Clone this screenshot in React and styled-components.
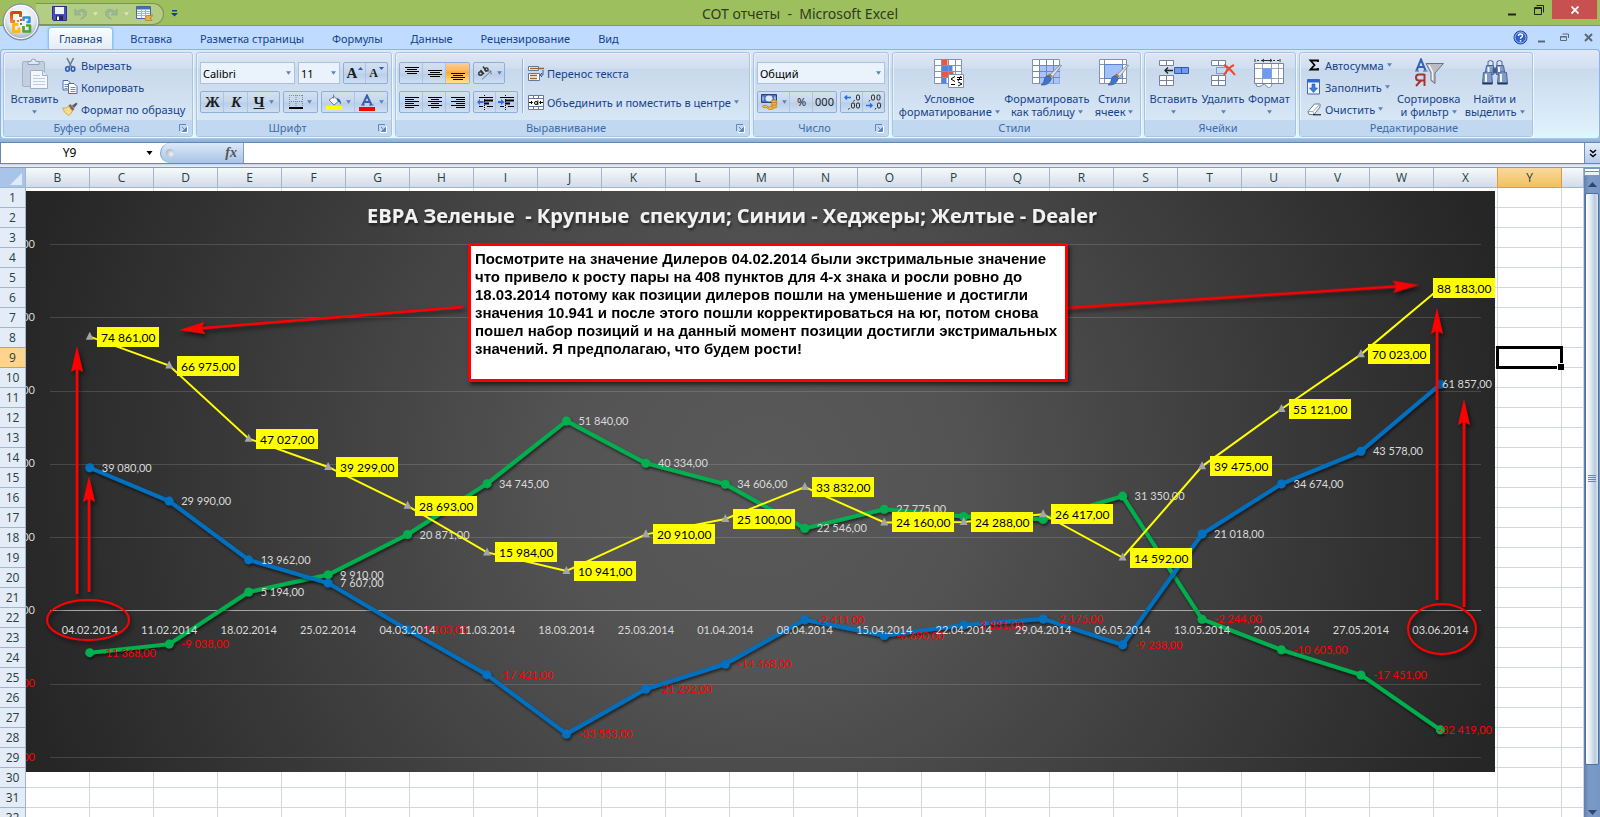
import React from "react";
import styled, { createGlobalStyle, css } from "styled-components";

const Global = createGlobalStyle`
  * { box-sizing: border-box; }
  body { margin: 0; background: #fff; overflow: hidden; }
  button, input, select { font: inherit; color: inherit; }
  svg { display: block; flex: none; }
`;

const Window = styled.div`
  display: flex;
  flex-direction: column;
  height: 100vh;
  overflow: hidden;
  font-family: "Noto Sans", "Open Sans", sans-serif;
  font-size: 11px;
  line-height: 13px;
  color: #15428b;
`;

/* ---------- title bar ---------- */

const TitleBar = styled.header`
  display: grid;
  grid-template-columns: 1fr auto 1fr;
  height: 26px;
  flex: none;
  background: #9dbf5e;
  border-bottom: 1px solid #7f9f45;
`;

const QuickBar = styled.div`
  display: flex;
  align-items: center;
  padding: 2px 0 2px 36px;
`;

const QuickPill = styled.div`
  display: flex;
  align-items: center;
  width: 128px;
  height: 22px;
  padding-left: 13px;
  gap: 2px;
  background: #b4cd85;
  border: 1px solid #7d9550;
  border-left: 0;
  border-radius: 0 11px 11px 0;
`;

const IconButton = styled.button`
  display: flex;
  align-items: center;
  justify-content: center;
  width: ${(p) => p.$w || 20}px;
  height: ${(p) => p.$h || 20}px;
  padding: 0;
  border: 0;
  background: ${(p) => p.$bg || "none"};
`;

const Title = styled.h1`
  margin: 0;
  font-size: 14px;
  line-height: 27px;
  font-weight: 400;
  color: #2f3a22;
  white-space: pre;
`;

const WindowButtons = styled.div`
  display: flex;
  justify-content: flex-end;
  align-items: flex-start;
  padding-right: 3px;
`;

const OfficeButton = styled.button`
  position: absolute;
  left: 2px;
  top: 3px;
  width: 38px;
  height: 38px;
  padding: 0;
  border: 0;
  background: none;
  z-index: 3;
`;

/* ---------- ribbon ---------- */

const TabRow = styled.nav`
  display: flex;
  align-items: flex-end;
  gap: 6px;
  height: 23px;
  flex: none;
  padding: 0 2px 0 48px;
  background: #bfdbff;
`;

const Tab = styled.button`
  height: 22px;
  padding: 0 10px;
  border: 1px solid transparent;
  border-bottom: 0;
  border-radius: 4px 4px 0 0;
  background: none;
  font-size: 11px;
  line-height: 16px;
  white-space: nowrap;
  ${(p) =>
    p.$active &&
    css`
      background: linear-gradient(#fbfdff, #e3ecf8);
      border-color: #8fc3ee;
      box-shadow: 0 0 2px #5fb6f0;
    `}
`;

const DocButtons = styled.div`
  display: flex;
  align-items: center;
  margin-left: auto;
  height: 23px;
  gap: 2px;
`;

const RibbonWrap = styled.section`
  flex: none;
  height: 94px;
  padding-bottom: 3px;
  background: linear-gradient(#bfdbff 0 80px, #9dbbe0 90px, #8eafd6);
  border-bottom: 1px solid #6488b5;
`;

const Ribbon = styled.div`
  display: flex;
  gap: 3px;
  height: 90px;
  padding: 2px 2px 1px;
  border: 1px solid #8db2e3;
  border-bottom-color: #a9c6e6;
  border-radius: 4px;
  background: linear-gradient(#dfe9f5, #d2e0f1 18px, #c9daee 19px, #dff0fb 80px, #d8fbff);
`;

const Group = styled.div`
  display: flex;
  flex-direction: column;
  width: ${(p) => p.$w}px;
  flex: none;
  border: 1px solid #a9c4df;
  border-radius: 3px;
  background: linear-gradient(#dde7f3, #d0deef 15px, #c8d8ec 16px, #d8e7f5 68px);
  box-shadow: 1px 1px 0 #eef6fd, inset 1px 1px 0 #e8f0f8;
  overflow: hidden;
`;

const GroupBody = styled.div`
  display: flex;
  align-items: flex-start;
  flex: 1;
  min-height: 0;
  padding: ${(p) => p.$pad || "0 3px"};
  gap: ${(p) => p.$gap || 0}px;
`;

const GroupLabel = styled.div`
  display: flex;
  flex: none;
  align-items: center;
  height: 16px;
  padding-right: 4px;
  background: #c1d8f0;
  color: #3e6aaa;
  font-size: 11px;
  line-height: 16px;

  span {
    flex: 1;
    text-align: center;
  }
`;

const BigButton = styled.button`
  display: flex;
  flex-direction: column;
  align-items: center;
  width: ${(p) => p.$w}px;
  padding: 5px 0 0;
  border: 0;
  background: none;
  white-space: nowrap;
  line-height: 13px;
`;

const BigIcon = styled.span`
  height: 34px;
`;

const CaretLine = styled.span`
  display: flex;
  align-items: center;
  justify-content: center;
  gap: 3px;
  height: 13px;
`;

const Stack = styled.div`
  display: flex;
  flex-direction: column;
  gap: ${(p) => p.$gap || 0}px;
  padding-top: ${(p) => p.$top || 0}px;
`;

const Line = styled.div`
  display: flex;
  gap: 3px;
`;

const SmallButton = styled.button`
  display: flex;
  align-items: center;
  gap: 3px;
  height: 22px;
  padding: 0 3px 0 0;
  border: 0;
  background: none;
  white-space: nowrap;
`;

const IconSlot = styled.span`
  display: flex;
  justify-content: center;
  width: 16px;
`;

const Segments = styled.div`
  display: flex;
  height: 22px;
  border: 1px solid #8fafd8;
  border-radius: 2px;
  background: linear-gradient(#d3e0f0, #c5d6ec 10px, #b9cee9 11px, #cfdff2);
`;

const Segment = styled.button`
  display: flex;
  align-items: center;
  justify-content: center;
  gap: ${(p) => p.$gap || 4}px;
  width: ${(p) => p.$w || 23}px;
  padding: 0;
  border: 0;
  background: ${(p) =>
    p.$active ? "linear-gradient(#f9cf96, #fdb55c 8px, #fba63c 9px, #ffe38a)" : "none"};

  & + & { box-shadow: -1px 0 0 #adc4e2; }
`;

const Glyph = styled.span`
  font-family: "Liberation Serif", serif;
  font-size: ${(p) => p.$size || 15}px;
  line-height: 18px;
  font-weight: 700;
  color: #1c1c1c;
  font-style: ${(p) => (p.$italic ? "italic" : "normal")};
  text-decoration: ${(p) => (p.$under ? "underline" : "none")};
`;

const NumGlyph = styled.span`
  font-size: 11px;
  line-height: 18px;
  color: #222;
`;

const Divider = styled.div`
  width: 2px;
  height: 54px;
  background: #8fb2de;
  border-right: 1px solid #eef5fc;
`;

const SelectBox = styled.div`
  position: relative;
  width: ${(p) => p.$w}px;
  height: 22px;

  select {
    width: 100%;
    height: 100%;
    padding: 0 2px;
    border: 1px solid #abc1de;
    border-radius: 0;
    background: #eaf2fb;
    color: #000;
    appearance: none;
  }

  svg {
    position: absolute;
    right: 4px;
    top: 9px;
    pointer-events: none;
  }
`;

/* ---------- formula bar ---------- */

const FormulaBar = styled.div`
  display: flex;
  flex: none;
  height: 21px;
  background: #fff;
  border-bottom: 1px solid #6488b5;
`;

const NameBox = styled.div`
  display: flex;
  align-items: center;
  width: 160px;
  border-left: 1px solid #6488b5;

  input {
    width: 137px;
    padding: 0;
    border: 0;
    text-align: center;
    font-size: 12px;
    line-height: 18px;
    color: #000;
    background: none;
  }
`;

const FxZone = styled.div`
  display: flex;
  align-items: center;
  justify-content: space-between;
  width: 84px;
  padding: 0 6px 0 5px;
  background: linear-gradient(#dce8f8, #a9c3e6);
  border: 1px solid #7d9cc6;
  border-width: 0 1px;
  border-radius: 10px 0 0 10px;
`;

const Knob = styled.span`
  width: 8px;
  height: 8px;
  border-radius: 4px;
  background: radial-gradient(circle at 65% 65%, #f2f4f7, #98a5b8);
`;

const FxButton = styled.button`
  padding: 0;
  border: 0;
  background: none;
  font-family: "Liberation Serif", serif;
  font-style: italic;
  font-weight: 700;
  font-size: 14px;
  line-height: 16px;
  color: #555;
`;

const FormulaInput = styled.input`
  flex: 1;
  min-width: 0;
  padding: 0 4px;
  border: 0;
  outline: 0;
  background: #fff;
`;

const ExpandButton = styled.button`
  display: flex;
  align-items: center;
  justify-content: center;
  width: 16px;
  padding: 0;
  border: 1px solid #6e8fb9;
  border-width: 0 0 0 1px;
  background: linear-gradient(#e4eefb, #b4cbea);
`;

const Splitter = styled.div`
  height: 4px;
  flex: none;
  background: linear-gradient(#c3d6ee, #eaf2fc);
  border-bottom: 1px solid #7d9ac0;
`;

/* ---------- sheet ---------- */

const Workspace = styled.main`
  display: flex;
  flex: 1;
  min-height: 0;
`;

const SheetArea = styled.div`
  position: relative;
  flex: 1;
  min-width: 0;
  overflow: hidden;
`;

const Sheet = styled.table`
  width: 100%;
  table-layout: fixed;
  border-collapse: separate;
  border-spacing: 0;
  font-family: "Open Sans", "Noto Sans", sans-serif;
  font-size: 12px;
  line-height: 16px;
  color: #24403f;

  col { width: 64px; }
  col:first-child { width: 26px; }
  col:last-child { width: auto; }
  th { font-weight: 400; padding: 1px 0 0; }
`;

const HeadCell = styled.th`
  height: 20px;
  border-right: 1px solid #9eb6ce;
  border-bottom: 1px solid ${(p) => (p.$active ? "#f29536" : "#9eb6ce")};
  background: ${(p) =>
    p.$active ? "linear-gradient(#f9d99f, #f1c15f)" : "linear-gradient(#f6fafb, #d3dbe9)"};
  ${(p) => p.$active && "border-right-color: #f29536; box-shadow: -1px 0 0 #f29536;"}
`;

const Corner = styled.th`
  height: 20px;
  border-right: 1px solid #9eb6ce;
  border-bottom: 1px solid #9eb6ce;
  background: #a9c4e9;

  svg { margin: 2px 3px 0 auto; }
`;

const RowHead = styled.th`
  height: 20px;
  border-right: 1px solid #9eb6ce;
  border-bottom: 1px solid ${(p) => (p.$active ? "#f29536" : "#9eb6ce")};
  background: ${(p) => (p.$active ? "#ffd58d" : "#e4ecf7")};
  ${(p) => p.$active && "box-shadow: 0 -1px 0 #f29536;"}
`;

const Cell = styled.td`
  position: relative;
  height: 20px;
  padding: 0;
  border-right: 1px solid #d0d7e5;
  border-bottom: 1px solid #d0d7e5;
`;

const Selection = styled.span`
  position: absolute;
  inset: -2px;
  border: 3px solid #000;
  z-index: 1;

  &::after {
    content: "";
    position: absolute;
    right: -4px;
    bottom: -4px;
    width: 6px;
    height: 6px;
    background: #000;
    border: 1px solid #fff;
    border-width: 1px 0 0 1px;
  }
`;

const ChartFrame = styled.figure`
  position: absolute;
  left: 26px;
  top: 23px;
  width: 1469px;
  height: 581px;
  margin: 0;
  z-index: 2;
`;

const Note = styled.p`
  position: absolute;
  left: 442px;
  top: 52px;
  width: 600px;
  height: 139px;
  margin: 0;
  padding: 4px;
  border: 3px solid #f00;
  background: #fff;
  box-shadow: 2px 3px 4px rgba(0, 0, 0, 0.6);
  font-family: "Liberation Sans", Arial, sans-serif;
  font-weight: 700;
  font-size: 15px;
  line-height: 18px;
  color: #000;
  white-space: pre;
`;

const ScrollBar = styled.div`
  display: flex;
  flex-direction: column;
  width: 16px;
  flex: none;
  background: linear-gradient(90deg, #5f7fae, #7b9ac6 5px, #7596c4);
`;

const SplitBox = styled.div`
  height: 8px;
  border: 1px solid #7c9ac0;
  background: #eaf1fa;
  box-shadow: inset 0 2px 0 #fff, inset 0 3px 0 #6d8db8;
`;

const ScrollButton = styled.button`
  display: flex;
  align-items: center;
  justify-content: center;
  width: 16px;
  height: ${(p) => p.$h}px;
  padding: 0;
  border: 0;
  background: none;
`;

const Thumb = styled.div`
  display: flex;
  align-items: center;
  justify-content: center;
  flex: 1;
  margin: 0 1px 43px;
  border: 1px solid #4f6f9f;
  border-radius: 2px;
  background: linear-gradient(90deg, #fff, #dfe8f2 5px, #b9c9dd 9px, #dbe6f3);
`;

/* ---------- icons ---------- */

const Caret = ({ color = "#5b82b8", w = 5 }) => (
  <svg width={w} height="4" viewBox="0 0 6 4"><path d="M0 0h6L3 4z" fill={color} /></svg>
);

const Launcher = () => (
  <svg width="9" height="9" viewBox="0 0 9 9" fill="none">
    <path d="M.5 7V.5H7" stroke="#5f88b8" />
    <path d="M2 8.500h6.500V2" stroke="#fff" />
    <path d="M3 3l3 3M7.500 3.500v4h-4z" stroke="#5f88b8" fill="#5f88b8" />
  </svg>
);

const OfficeLogo = () => (
  <svg width="38" height="38" viewBox="0 0 38 38">
    <defs>
      <radialGradient id="orb" cx="50%" cy="35%" r="65%">
        <stop offset="0" stopColor="#ffffff" />
        <stop offset=".6" stopColor="#e3e8ee" />
        <stop offset="1" stopColor="#9aa7b8" />
      </radialGradient>
      <linearGradient id="red" x2="0" y2="1"><stop stopColor="#d8400c" /><stop offset="1" stopColor="#f58220" /></linearGradient>
    </defs>
    <circle cx="19" cy="19" r="18" fill="url(#orb)" stroke="#76849a" />
    <circle cx="19" cy="19" r="16.500" fill="none" stroke="#fff" />
    <g fill="none" strokeWidth="3" strokeLinejoin="round">
      <path d="M13 18.500h-3.500V10.500q0-1 1-1H18.500V14" stroke="url(#red)" />
      <path d="M21.500 18V14.500h6v4.500h-3" stroke="#2f8fe0" strokeWidth="2.500" />
      <path d="M16.500 21.500h-5v7h5.500v-4" stroke="#fdb813" />
      <path d="M21.500 23v5.500h6.500v-6h-4" stroke="#4ea72e" strokeWidth="2.700" />
    </g>
    <g fill="#f27b20"><path d="M15 17h2v2h-2z" /><path d="M18 20h2v2h-2z" fill="#4ea72e" /><path d="M18 16h2v2h-2z" fill="#e8541a" /></g>
  </svg>
);

const SaveIcon = () => (
  <svg width="15" height="15" viewBox="0 0 15 15">
    <path d="M.5.500h14v14h-13l-1-1z" fill="#4a4fc0" stroke="#2d2f8a" />
    <path d="M3 1h9v7H3z" fill="#eef2fb" /><path d="M4 9.500h7V14H4z" fill="#222a55" /><path d="M5 10.500h2V14H5z" fill="#fff" />
  </svg>
);
const UndoIcon = ({ flip }) => (
  <svg width="13" height="13" viewBox="0 0 13 13" fill="none">
    <g transform={flip ? "matrix(-1 0 0 1 13 0)" : undefined}>
      <path d="M.8 2v6h6L4.800 6Q8.500 2.800 9.800 6T6.500 12.300Q13.500 10 12.300 5T3 4.200z" fill="#9db99c" stroke="#88a688" strokeWidth=".6" />
    </g>
  </svg>
);
const TableCheckIcon = () => (
  <svg width="17" height="15" viewBox="0 0 17 15">
    <path d="M.5.500h14v12H.5z" fill="#fff" stroke="#46669c" /><path d="M1 1h13v2.500H1z" fill="#3f6fc4" />
    <path d="M1 5.500h13M1 7.500h13M1 9.500h13M5.500 3v9M9.500 3v9" stroke="#9db5da" />
    <path d="M9 12.500q.5-3.500 3-3t4.500-1q0 3-2.500 3.500l2 2.500H9.500z" fill="#e8b04a" stroke="#a8701a" strokeWidth=".6" />
  </svg>
);
const QatMenuIcon = () => (
  <svg width="7" height="7" viewBox="0 0 7 7"><path d="M1 0h5v1.500H1zM0 3h7L3.500 6.500z" fill="#15428b" /></svg>
);

const HelpIcon = () => (
  <svg width="15" height="15" viewBox="0 0 15 15">
    <circle cx="7.500" cy="7.500" r="6.500" fill="#2c5fd0" stroke="#1d3f96" /><circle cx="7.500" cy="7.500" r="5.500" fill="none" stroke="#b9d2ff" strokeWidth=".8" />
    <path d="M5.500 6q0-2 2-2t2 1.700q0 1-1.200 1.600-.8.400-.8 1.400" fill="none" stroke="#fff" strokeWidth="1.400" /><circle cx="7.500" cy="10.800" r=".9" fill="#fff" />
  </svg>
);

const PasteIcon = () => (
  <svg width="28" height="32" viewBox="0 0 28 32">
    <rect x="1.500" y="3.500" width="22" height="25" rx="1.500" fill="#c3cfdf" stroke="#a4b2c8" />
    <path d="M7 3.500h3q0-2.500 2.500-2.500T15 3.500h3v3H7z" fill="#dfe6ef" stroke="#8fa0b8" />
    <path d="M9.500 12.500h12l5 5v13h-17z" fill="#f4f7fb" stroke="#9db0cb" /><path d="M21.500 12.500v5h5" fill="#dfe8f4" stroke="#9db0cb" />
    <path d="M12 17.500h7M12 20.500h12M12 23.500h12M12 26.500h12" stroke="#bccbe0" />
  </svg>
);
const CutIcon = () => (
  <svg width="14" height="16" viewBox="0 0 14 16" fill="none">
    <path d="M4 1l4.500 9M10.500 1L6 10" stroke="#6d7b90" strokeWidth="1.600" />
    <ellipse cx="4.500" cy="12" rx="1.800" ry="2.200" stroke="#2d5cb0" strokeWidth="1.600" /><ellipse cx="10" cy="12" rx="1.800" ry="2.200" stroke="#2d5cb0" strokeWidth="1.600" />
  </svg>
);
const CopyIcon = () => (
  <svg width="16" height="14" viewBox="0 0 16 14">
    <path d="M1 .500h5l2.500 2.500v7H1z" fill="#fff" stroke="#4c6ea5" /><path d="M2.500 4.500h4M2.500 6.500h4M2.500 8.500h3" stroke="#6c8fc6" />
    <path d="M6.500 3.500h5.500l3 3v7H6.500z" fill="#fff" stroke="#4c6ea5" /><path d="M8.500 7.500h5M8.500 9.500h5M8.500 11.500h5" stroke="#6c8fc6" />
  </svg>
);
const BrushIcon = () => (
  <svg width="16" height="14" viewBox="0 0 16 14">
    <path d="M.500 6q4 1 6-2l4 5q-2 4-4 4.500Q2 11 .5 6z" fill="#f5dc8a" stroke="#c09a3a" strokeWidth=".7" />
    <path d="M6.500 3.500L8.500 2l4 5-2 2z" fill="#8a6a5c" /><path d="M10 3.500L14.500.500l1 1.500L12 6z" fill="#555e70" />
  </svg>
);
const GrowArrow = () => (
  <svg width="5" height="14" viewBox="0 0 5 14"><path d="M0 4h5L2.500 1z" fill="#2d5cb0" /></svg>
);
const ShrinkArrow = () => (
  <svg width="5" height="14" viewBox="0 0 5 14"><path d="M0 1h5L2.500 4z" fill="#2d5cb0" /></svg>
);
const BordersIcon = () => (
  <svg width="14" height="14" viewBox="0 0 14 14"><path d="M.5 0v12M13.500 0v12M7 0v12M0 .500h14M0 6.500h14" stroke="#7888a8" strokeDasharray="1 1" fill="none" /><path d="M0 12h14v2H0z" /></svg>
);
const FillIcon = () => (
  <svg width="16" height="16" viewBox="0 0 16 16">
    <path d="M7.500.500v4M3 6l5-3.500 5 4.500-5 4z" fill="#f4f7fc" stroke="#6d7f9c" /><path d="M10.500 4q5 1 4.500 7-1-3-3.500-4z" fill="#2d5cb0" /><path d="M0 12h16v4H0z" fill="#ff0" />
  </svg>
);
const FontColorIcon = () => (
  <svg width="16" height="17" viewBox="0 0 16 17">
    <path d="M3.500 11L8 1.500 12.500 11M5 8h6" fill="none" stroke="#3a5ea8" strokeWidth="2" /><path d="M2 11h4M10 11h4.500" stroke="#3a5ea8" /><path d="M0 13h16v4H0z" fill="#f00" />
  </svg>
);
const LinesIcon = ({ rows }) => (
  <svg width="14" height="14" viewBox="0 0 14 14">
    {rows.map(([x, y, l]) => <path key={y} d={`M${x} ${y}.5h${l}`} stroke="#000" />)}
  </svg>
);
const OrientIcon = () => (
  <svg width="16" height="14" viewBox="0 0 16 14" fill="none" stroke="#333">
    <path d="M5 13.500L14 5M10.500 5H14v3.500" stroke="#6a7a90" /><circle cx="3.500" cy="7.500" r="1.800" strokeWidth="1.400" /><path d="M3.500 4l3.500 4M6 .5l3.500 5" strokeWidth="1.400" /><circle cx="9.500" cy="3.500" r="1.600" strokeWidth="1.400" />
  </svg>
);
const IndentIcon = ({ right }) => (
  <svg width="17" height="15" viewBox="0 0 17 15">
    <path d="M2 2.500h14M2 11.500h4M10 11.500h6" stroke="#000" /><path d="M7 5.500h9M7 8.500h5" stroke="#000" strokeWidth="2" /><path d="M7.500 0v15" stroke="#000" strokeDasharray="1 1" />
    <path d={right ? "M6.500 7L3 4v2H0v2h3v2z" : "M0 7l3-3v2h3.500v2H3v2z"} fill="#2d6be0" />
  </svg>
);
const WrapIcon = () => (
  <svg width="16" height="15" viewBox="0 0 16 15">
    <path d="M.5.500h10v4H.5zM.5 7.500h11v7H.5z" fill="#fff" stroke="#62799b" /><path d="M2 2.500h14M2 9.500h7M2 12.500h7" stroke="#a4622b" strokeWidth="1.300" />
    <path d="M15 4v5h-2.500M14 7l-2 2 2 2" stroke="#3d5d8e" fill="none" />
  </svg>
);
const MergeIcon = () => (
  <svg width="16" height="15" viewBox="0 0 16 15">
    <path d="M.5.500h15v14H.5z" fill="#fff" stroke="#62799b" /><path d="M1 3.500h14M1 11.500h14M5.500 0v3M10.500 0v3M5.500 12v3M10.500 12v3" stroke="#62799b" />
    <path d="M1 7.500h3M15 7.500h-3M3 6l1.500 1.500L3 9M13 6l-1.500 1.500L13 9" stroke="#000" fill="none" /><circle cx="8" cy="8" r="1.500" fill="none" stroke="#000" /><path d="M9.800 5.500v4.500" stroke="#000" />
  </svg>
);
const MoneyIcon = () => (
  <svg width="17" height="16" viewBox="0 0 17 16">
    <path d="M.5.500h15v8H.5z" fill="#4a72c0" stroke="#28457f" /><ellipse cx="8" cy="4.500" rx="3.500" ry="3" fill="#dfe9fb" /><path d="M2 2.500v4M14 2.500v4" stroke="#dfe9fb" />
    <g fill="#f5b93a" stroke="#a8701a" strokeWidth=".6"><ellipse cx="13" cy="7.500" rx="3" ry="1.500" /><ellipse cx="13" cy="10" rx="3" ry="1.500" /><ellipse cx="13" cy="12.500" rx="3" ry="1.500" /><ellipse cx="9.500" cy="14" rx="3" ry="1.500" /><ellipse cx="4" cy="12.500" rx="2.500" ry="1.300" /></g>
  </svg>
);
const DecimalIcon = ({ less }) => (
  <svg width="17" height="16" viewBox="0 0 17 16">
    <path d={less ? "M1 11.500h6M5 9.500l2 2-2 2" : "M7 3.500H1M3 1.500l-2 2 2 2"} stroke="#2d6be0" strokeWidth="1.500" fill="none" />
    <g fill="none" stroke="#222">
      {less ? (
        <><path d="M5 6l-1 1.500M11 14l-1 1.500" /><rect x="6.500" y="1" width="3" height="5" rx="1.300" /><rect x="12" y="1" width="3" height="5" rx="1.300" /><rect x="12.500" y="9" width="3" height="5" rx="1.300" /></>
      ) : (
        <><path d="M10.500 6l-1 1.500M5.500 14l-1 1.500" /><rect x="12.500" y="1" width="3" height="5" rx="1.300" /><rect x="7.500" y="9" width="3" height="5" rx="1.300" /><rect x="12.500" y="9" width="3" height="5" rx="1.300" /></>
      )}
    </g>
  </svg>
);
const GridBase = ({ children }) => (
  <svg width="30" height="30" viewBox="0 0 30 30">
    <path d="M.5 1.500h27v24H.5z" fill="#fff" stroke="#8494b0" />
    {children}
  </svg>
);
const gridLines = "M1 7.500h27M1 13.500h27M1 19.500h27M7.500 2v24M14.500 2v24M21.500 2v24";
const Brush = () => (
  <g>
    <path d="M29.500 7.500l-10 13-3-2.500L28 7z" fill="#d9dde4" stroke="#7c8594" strokeWidth=".8" />
    <path d="M19 19.500l-3.500-2 2-2 3 2.500z" fill="#a8793a" /><path d="M19.500 20.500l-3.500-3q-4 1-4 5.500-1 3-3 4 8 1 10.500-6.500z" fill="#3f74c8" stroke="#2a4f94" strokeWidth=".6" />
  </g>
);
const CondFormatIcon = () => (
  <GridBase>
    <path d="M7.500 1.500h6v6h-6zM7.500 13.500h12v6h-12z" fill="#f0563c" /><path d="M7.500 7.500h11v6h-11zM7.500 19.500h5v6h-5z" fill="#4d86e8" />
    <path d={gridLines} stroke="#8494b0" fill="none" />
    <path d="M14.500 16.500h15v13h-15z" fill="#fff" stroke="#8494b0" /><path d="M21 18.500l-4 2.500 4 2.500M17 26.500h4M23 19.500h5M23 21.500h5M27 18l-3 5M24 24l4 2-4 2" stroke="#000" fill="none" />
  </GridBase>
);
const FormatTableIcon = () => (
  <GridBase><path d="M7.500 7.500h20v18h-20z" fill="#a8c4f8" /><path d={gridLines} stroke="#7188b4" fill="none" /><Brush /></GridBase>
);
const CellStylesIcon = () => (
  <GridBase><path d="M1 6.500h27M1 20.500h27M5.500 2v24M23.500 2v24" stroke="#8494b0" /><path d="M5.500 6.500h18v14h-18z" fill="#a2c0fa" stroke="#5c82c8" /><Brush /></GridBase>
);
const InsertCellsIcon = () => (
  <svg width="30" height="30" viewBox="0 0 30 30"><g fill="#fff" stroke="#75839f"><path d="M.5 2.500h14v5H.5zM7.500 2.500v5M.5 17.500h14v10H.5zM7.500 17.500v10M.5 22.500h14" /><path d="M15.500 9.500h14v6h-14zM22.500 9.500v6" fill="#6d9cf0" stroke="#39589c" /></g><path d="M14 12.500H6M9 9.500l-3 3 3 3" stroke="#222" fill="none" strokeWidth="1.300" /></svg>
);
const DeleteCellsIcon = () => (
  <svg width="30" height="30" viewBox="0 0 30 30"><g fill="#fff" stroke="#75839f"><path d="M3.500 2.500h14v5h-14zM10.500 2.500v5M3.500 17.500h14v10h-14zM10.500 17.500v10M3.500 22.500h14" /></g><path d="M8.500 9.500h10v6h-10z" fill="none" stroke="#3b5ba5" strokeDasharray="1 1" /><path d="M16 7q5 2.500 11 10M26 7q-5 2-10 10" stroke="#f0472a" strokeWidth="2" fill="none" /></svg>
);
const FormatCellsIcon = () => (
  <svg width="30" height="30" viewBox="0 0 30 30"><path d="M.5 5.500h29v20H.5z" fill="#fff" stroke="#75839f" /><path d="M1 10.500h28M1 20.500h28M8.500 6v19M17.500 6v19M24.500 6v19" stroke="#9aa8c0" /><path d="M8.500 10.500h9v10h-9z" fill="#6d9cf0" /><path d="M1 1v3M8 2.500h10M26 1v3M10 1L8 2.500 10 4M16 1l2 1.500L16 4" stroke="#333" fill="none" /><path d="M3 2.500h22" stroke="#333" strokeDasharray="2 2" /><path d="M2 26q0 3 3 2.500t4-2 4 2 5-2.500" fill="#fff" stroke="#75839f" /></svg>
);
const SumIcon = () => (
  <svg width="14" height="14" viewBox="0 0 14 14"><path d="M11 4V2.500H3.500L7.500 7l-4 4.500H11V10" fill="none" stroke="#000" strokeWidth="1.800" /></svg>
);
const FillDownIcon = () => (
  <svg width="14" height="16" viewBox="0 0 14 16"><path d="M.5.500h12v14.500H.5z" fill="#eef4fd" stroke="#4468b0" /><path d="M.5.500h12v3H.5z" fill="#2f66d0" /><path d="M5 5h3v4h2.500L6.500 13.500 2.500 9H5z" fill="#3f7be8" stroke="#2450a8" strokeWidth=".6" /></svg>
);
const EraserIcon = () => (
  <svg width="14" height="14" viewBox="0 0 14 14"><path d="M1 9.500L7.500 2h5.500v3L7 12.500H2z" fill="#fff" stroke="#6c7a92" /><path d="M1 9.500h5L13 2M6 9.500l1 3" stroke="#9aa8c0" fill="none" /><path d="M6 12.800h8" stroke="#000" /></svg>
);
const SortIcon = () => (
  <svg width="30" height="30" viewBox="0 0 30 30">
    <path d="M2.500 12.500L7 1.500l4.500 11M4 9h6" fill="none" stroke="#3560b8" strokeWidth="2" /><path d="M1 13h4M9 13h4.500" stroke="#3560b8" />
    <path d="M10.500 16v12M10.500 16.500H5q-3 0-3 3t3 3h5.500M7 22.500L2 28" fill="none" stroke="#a83430" strokeWidth="2" />
    <path d="M12 5.500h17.500L21 15v10.500l-4-3V15z" fill="#b9bcc2" stroke="#6e7278" /><path d="M15 7l3.500 7v8" stroke="#f2f3f5" strokeWidth="1.500" fill="none" />
  </svg>
);
const FindIcon = () => (
  <svg width="30" height="30" viewBox="0 0 30 30">
    <g fill="#7f9bc6" stroke="#4a6496">
      <path d="M8 3.500q2.500-2 5 0v4H8zM17 3.500q2.500-2 5 0v4h-5z" fill="#dbe5f4" /><path d="M6.500 7.500h7v9H5zM16.500 7.500h7l1.500 9h-8.500z" /><path d="M13 10h4v5h-4z" fill="#3d5a90" />
      <path d="M3.500 14.500q4-1.500 8 0l1 11H2.500zM18.500 14.500q4-1.500 8 0l1 11h-10z" />
    </g>
    <path d="M6 16v8M21 16v8M8.500 9v5M19 9v5" stroke="#eef4fc" strokeWidth="2" /><path d="M2.500 25.500h10M17.500 25.500h10" stroke="#22365e" strokeWidth="2" />
  </svg>
);

/* ---------- chart ---------- */

const X0 = 63.75;
const STEP = 79.45;
const ZERO = 420;
const px = (i) => X0 + i * STEP;
const py = (v) => ZERO - (v * 73.3) / 20000;

const DATES = ["04.02.2014", "11.02.2014", "18.02.2014", "25.02.2014", "04.03.2014", "11.03.2014", "18.03.2014", "25.03.2014", "01.04.2014", "08.04.2014", "15.04.2014", "22.04.2014", "29.04.2014", "06.05.2014", "13.05.2014", "20.05.2014", "27.05.2014", "03.06.2014"];
const GREEN = [-11368, -9038, 5194, 9910, 20871, 34745, 51840, 40334, 34606, 22546, 27775, 25800, 25000, 31350, -2244, -10605, -17451, -32419];
const BLUE = [39080, 29990, 13962, 7607, -5103, -17421, -33553, -21292, -14468, -2411, -6690, -3831, -2175, -9238, 21018, 34674, 43578, 61857];
const YELLOW = [74861, 66975, 47027, 39299, 28693, 15984, 10941, 20910, 25100, 33832, 24160, 24288, 26417, 14592, 39475, 55121, 70023, 88183];
const UNLABELLED = [11, 12];
const AXIS = [100000, 80000, 60000, 40000, 20000, 0, -20000, -40000];
const LAST = DATES.length - 1;

const money = (v) => {
  const s = String(Math.abs(v));
  const head = s.slice(0, -3);
  return `${v < 0 ? "-" : ""}${head ? head + " " : ""}${s.slice(-3)},00`;
};
const poly = (data) => data.map((v, i) => `${px(i)},${py(v)}`).join(" ");

const ChartText = styled.text`
  font-family: Lato, "Open Sans", sans-serif;
  font-size: ${(p) => p.$size || 11}px;
  fill: ${(p) => p.$fill || "#d9d9d9"};
`;
const ChartTitle = styled.text`
  font-family: "Open Sans", "Noto Sans", sans-serif;
  font-weight: 700;
  font-size: 20px;
  fill: #f2f2f2;
  white-space: pre;
`;

const Series = ({ data, color }) => (
  <g filter="url(#soft)">
    <polyline points={poly(data)} fill="none" stroke={color} strokeWidth="4" strokeLinejoin="round" />
    {data.map((v, i) => <circle key={i} cx={px(i)} cy={py(v)} r="4.500" fill={color} />)}
  </g>
);

const Labels = ({ data, skip = [] }) =>
  data.map((v, i) =>
    skip.includes(i) ? null : (
      <ChartText
        key={i}
        x={i === LAST ? 1466 : px(i) + 12}
        y={py(v) + 4}
        textAnchor={i === LAST ? "end" : "start"}
        $fill={v < 0 ? "#f00" : undefined}
      >
        {money(v)}
      </ChartText>
    )
  );

const Arrow = ({ from, to }) => {
  const [x1, y1] = from;
  const [x2, y2] = to;
  const len = Math.hypot(x2 - x1, y2 - y1);
  const deg = (Math.atan2(y2 - y1, x2 - x1) * 180) / Math.PI;
  return (
    <g transform={`translate(${x2} ${y2}) rotate(${deg})`} fill="#f00">
      <path d={`M${-len} -1.300H-22V1.300H${-len}z`} />
      <path d="M0 0L-26 -6L-22.500 0L-26 6z" />
    </g>
  );
};

const Chart = () => (
  <ChartFrame>
    <svg width="1469" height="581" viewBox="0 0 1469 581" role="img" aria-label="COT">
      <defs>
        <radialGradient id="bg" gradientUnits="userSpaceOnUse" cx="735" cy="290" r="760">
          <stop offset="0" stopColor="#595959" />
          <stop offset=".25" stopColor="#545454" />
          <stop offset="1" stopColor="#262626" />
        </radialGradient>
        <filter id="soft" x="-5%" y="-5%" width="110%" height="115%">
          <feDropShadow dx="1" dy="2" stdDeviation="1.500" floodColor="#000" floodOpacity=".6" />
        </filter>
        <filter id="marks" filterUnits="userSpaceOnUse" x="0" y="0" width="1469" height="581">
          <feDropShadow dx="2" dy="3" stdDeviation="2" floodColor="#000" floodOpacity=".6" />
        </filter>
      </defs>
      <rect width="1469" height="581" fill="url(#bg)" />
      {AXIS.map((v) => (
        <g key={v}>
          <path
            d={`M24 ${v === 0 ? 419.5 : Math.floor(py(v)) + 0.5}H1455`}
            stroke={v === 0 ? "#a6a6a6" : "#fff"}
            strokeOpacity={v === 0 ? 1 : 0.14}
          />
          <ChartText x="9" y={py(v) + 3} textAnchor="end" $fill={v < 0 ? "#f00" : undefined}>{money(v)}</ChartText>
        </g>
      ))}
      <ChartTitle x="341" y="32" filter="url(#soft)">{"ЕВРА Зеленые  - Крупные  спекули; Синии - Хеджеры; Желтые - Dealer"}</ChartTitle>
      <Series data={GREEN} color="#00b050" />
      <Series data={BLUE} color="#0070c0" />
      <Labels data={GREEN} skip={UNLABELLED} />
      <Labels data={BLUE} />
      <polyline points={poly(YELLOW)} fill="none" stroke="#ff0" strokeWidth="2" />
      {YELLOW.map((v, i) => {
        const x = px(i);
        const y = py(v);
        const bx = i === LAST ? 1407 : Math.floor(x + 8);
        return (
          <g key={i}>
            <path d={`M${x} ${y - 5}l4 8h-8z`} fill="#a5a5a5" />
            <rect x={bx} y={Math.round(y - 10)} width="62" height="20" fill="#ff0" />
            <ChartText x={bx + 4} y={Math.round(y) + 5} $size={12} $fill="#000">{money(v)}</ChartText>
          </g>
        );
      })}
      {DATES.map((d, i) => <ChartText key={d} x={px(i)} y="443" textAnchor="middle">{d}</ChartText>)}
      <g filter="url(#marks)">
        <Arrow from={[437, 116]} to={[153, 139]} />
        <Arrow from={[1039, 117]} to={[1393, 94]} />
        <Arrow from={[51, 403]} to={[51, 155]} />
        <Arrow from={[63, 401]} to={[63, 285]} />
        <Arrow from={[1411, 409]} to={[1411, 117]} />
        <Arrow from={[1438, 416]} to={[1438, 208]} />
        <ellipse cx="62" cy="429" rx="41" ry="20" fill="none" stroke="#f00" strokeWidth="2" />
        <ellipse cx="1416" cy="438" rx="34" ry="25" fill="none" stroke="#f00" strokeWidth="2" />
      </g>
    </svg>
    <Note>{`Посмотрите на значение Дилеров 04.02.2014 были экстримальные значение
что привело к росту пары на 408 пунктов для 4-х знака и росли ровно до
18.03.2014 потому как позиции дилеров пошли на уменьшение и достигли
значения 10.941 и после этого пошли корректироваться на юг, потом снова
пошел набор позиций и на данный момент позиции достигли экстримальных
значений. Я предполагаю, что будем рости!`}</Note>
  </ChartFrame>
);

/* ---------- page ---------- */

const TABS = ["Главная", "Вставка", "Разметка страницы", "Формулы", "Данные", "Рецензирование", "Вид"];
const COLUMNS = "BCDEFGHIJKLMNOPQRSTUVWXY".split("");
const ROWS = Array.from({ length: 32 }, (_, i) => i + 1);

const RibbonGroup = ({ w, label, launcher, pad, gap, children }) => (
  <Group $w={w}>
    <GroupBody $pad={pad} $gap={gap}>{children}</GroupBody>
    <GroupLabel><span>{label}</span>{launcher && <Launcher />}</GroupLabel>
  </Group>
);

const Big = ({ w, icon, first, second }) => (
  <BigButton $w={w}>
    <BigIcon>{icon}</BigIcon>
    <span>{first}</span>
    <CaretLine>{second}<Caret /></CaretLine>
  </BigButton>
);

const Small = ({ icon, label, menu }) => (
  <SmallButton>
    <IconSlot>{icon}</IconSlot>
    {label}
    {menu && <Caret />}
  </SmallButton>
);

export default function App() {
  return (
    <Window>
      <Global />
      <TitleBar>
        <QuickBar>
          <QuickPill>
            <IconButton $w={20} aria-label="Сохранить"><SaveIcon /></IconButton>
            <IconButton $w={18} aria-label="Отменить"><UndoIcon /></IconButton>
            <IconButton $w={9} aria-label="История отмены"><Caret color="#dbe6c2" /></IconButton>
            <IconButton $w={18} aria-label="Вернуть"><UndoIcon flip /></IconButton>
            <IconButton $w={9} aria-label="История возврата"><Caret color="#dbe6c2" /></IconButton>
            <IconButton $w={22} aria-label="Таблица"><TableCheckIcon /></IconButton>
          </QuickPill>
          <IconButton aria-label="Настройка панели"><QatMenuIcon /></IconButton>
        </QuickBar>
        <Title>COT отчеты  -  Microsoft Excel</Title>
        <WindowButtons>
          <IconButton $w={26} aria-label="Свернуть"><svg width="8" height="14"><path d="M0 11.500h8" stroke="#222" strokeWidth="2" /></svg></IconButton>
          <IconButton $w={27} aria-label="Восстановить"><svg width="10" height="16" fill="none" stroke="#222"><path d="M.5 5.500h7v7h-7zM2.500 3.500h7v7M.5 6.500h7" /></svg></IconButton>
          <IconButton $w={45} $h={19} $bg="#c75050" aria-label="Закрыть"><svg width="8" height="8"><path d="M.5.500l7 7M7.500.500l-7 7" stroke="#fff" strokeWidth="1.800" /></svg></IconButton>
        </WindowButtons>
      </TitleBar>
      <OfficeButton aria-label="Office"><OfficeLogo /></OfficeButton>

      <TabRow>
        {TABS.map((t, i) => <Tab key={t} $active={i === 0}>{t}</Tab>)}
        <DocButtons>
          <IconButton aria-label="Справка"><HelpIcon /></IconButton>
          <IconButton aria-label="Свернуть книгу"><svg width="8" height="10"><path d="M0 8.500h7" stroke="#5c6878" strokeWidth="2" /></svg></IconButton>
          <IconButton $w={22} aria-label="Восстановить книгу"><svg width="10" height="9" fill="none" stroke="#5c6878"><path d="M.5 3.500h6v4h-6zM2.500 1h6v4M.5 4h6" /></svg></IconButton>
          <IconButton aria-label="Закрыть книгу"><svg width="9" height="9"><path d="M1 1l7 7M8 1l-7 7" stroke="#5c6878" strokeWidth="2" /></svg></IconButton>
        </DocButtons>
      </TabRow>

      <RibbonWrap>
        <Ribbon>
          <RibbonGroup w={190} label="Буфер обмена" launcher>
            <Big w={55} icon={<PasteIcon />} first="Вставить" />
            <Stack $top={1}>
              <Small icon={<CutIcon />} label="Вырезать" />
              <Small icon={<CopyIcon />} label="Копировать" />
              <Small icon={<BrushIcon />} label="Формат по образцу" />
            </Stack>
          </RibbonGroup>

          <RibbonGroup w={196} label="Шрифт" launcher>
            <Stack $gap={7} $top={9}>
              <Line>
                <SelectBox $w={95}><select aria-label="Шрифт"><option>Calibri</option></select><Caret /></SelectBox>
                <SelectBox $w={42}><select aria-label="Размер"><option>11</option></select><Caret /></SelectBox>
                <Segments>
                  <Segment $w={22} $gap={1} aria-label="Увеличить размер"><Glyph>A</Glyph><GrowArrow /></Segment>
                  <Segment $w={21} $gap={1} aria-label="Уменьшить размер"><Glyph $size={12}>A</Glyph><ShrinkArrow /></Segment>
                </Segments>
              </Line>
              <Line>
                <Segments>
                  <Segment><Glyph>Ж</Glyph></Segment>
                  <Segment $w={24}><Glyph $italic>К</Glyph></Segment>
                  <Segment $w={31}><Glyph $under>Ч</Glyph><Caret /></Segment>
                </Segments>
                <Segments><Segment $w={33} aria-label="Границы"><BordersIcon /><Caret /></Segment></Segments>
                <Segments>
                  <Segment $w={33} aria-label="Цвет заливки"><FillIcon /><Caret /></Segment>
                  <Segment $w={32} aria-label="Цвет текста"><FontColorIcon /><Caret /></Segment>
                </Segments>
              </Line>
            </Stack>
          </RibbonGroup>

          <RibbonGroup w={355} label="Выравнивание" launcher gap={4}>
            <Stack $gap={7} $top={9}>
              <Line>
                <Segments>
                  <Segment aria-label="По верхнему краю"><LinesIcon rows={[[0, 1, 14], [2, 3, 10], [0, 5, 14], [2, 7, 10]]} /></Segment>
                  <Segment aria-label="По середине"><LinesIcon rows={[[0, 4, 14], [2, 6, 10], [0, 8, 14], [2, 10, 10]]} /></Segment>
                  <Segment $active aria-label="По нижнему краю"><LinesIcon rows={[[0, 7, 14], [2, 9, 10], [0, 11, 14], [2, 13, 10]]} /></Segment>
                </Segments>
                <Segments><Segment $w={30} aria-label="Ориентация"><OrientIcon /><Caret /></Segment></Segments>
              </Line>
              <Line>
                <Segments>
                  <Segment aria-label="По левому краю"><LinesIcon rows={[[0, 2, 14], [0, 4, 9], [0, 6, 14], [0, 8, 9], [0, 10, 14], [0, 12, 9]]} /></Segment>
                  <Segment aria-label="По центру"><LinesIcon rows={[[0, 2, 14], [3, 4, 8], [0, 6, 14], [3, 8, 8], [0, 10, 14], [3, 12, 8]]} /></Segment>
                  <Segment aria-label="По правому краю"><LinesIcon rows={[[0, 2, 14], [5, 4, 9], [0, 6, 14], [5, 8, 9], [0, 10, 14], [5, 12, 9]]} /></Segment>
                </Segments>
                <Segments>
                  <Segment $w={22} aria-label="Уменьшить отступ"><IndentIcon /></Segment>
                  <Segment $w={21} aria-label="Увеличить отступ"><IndentIcon right /></Segment>
                </Segments>
              </Line>
            </Stack>
            <Stack $top={6}><Divider /></Stack>
            <Stack $gap={7} $top={9}>
              <Small icon={<WrapIcon />} label="Перенос текста" />
              <Small icon={<MergeIcon />} label="Объединить и поместить в центре" menu />
            </Stack>
          </RibbonGroup>

          <RibbonGroup w={136} label="Число" launcher>
            <Stack $gap={7} $top={9}>
              <SelectBox $w={128}><select aria-label="Числовой формат"><option>Общий</option></select><Caret /></SelectBox>
              <Line>
                <Segments>
                  <Segment $w={32} aria-label="Финансовый формат"><MoneyIcon /><Caret /></Segment>
                  <Segment><NumGlyph>%</NumGlyph></Segment>
                  <Segment><NumGlyph>000</NumGlyph></Segment>
                </Segments>
                <Segments>
                  <Segment $w={22} aria-label="Увеличить разрядность"><DecimalIcon /></Segment>
                  <Segment $w={21} aria-label="Уменьшить разрядность"><DecimalIcon less /></Segment>
                </Segments>
              </Line>
            </Stack>
          </RibbonGroup>

          <RibbonGroup w={249} label="Стили">
            <Big w={107} icon={<CondFormatIcon />} first="Условное" second="форматирование" />
            <Big w={89} icon={<FormatTableIcon />} first="Форматировать" second="как таблицу" />
            <Big w={46} icon={<CellStylesIcon />} first="Стили" second="ячеек" />
          </RibbonGroup>

          <RibbonGroup w={152} label="Ячейки">
            <Big w={51} icon={<InsertCellsIcon />} first="Вставить" />
            <Big w={48} icon={<DeleteCellsIcon />} first="Удалить" />
            <Big w={44} icon={<FormatCellsIcon />} first="Формат" />
          </RibbonGroup>

          <RibbonGroup w={234} label="Редактирование" pad="0 2px 0 6px">
            <Stack $top={1}>
              <Small icon={<SumIcon />} label="Автосумма" menu />
              <Small icon={<FillDownIcon />} label="Заполнить" menu />
              <Small icon={<EraserIcon />} label="Очистить" menu />
            </Stack>
            <Big w={68} icon={<SortIcon />} first="Сортировка" second="и фильтр" />
            <Big w={64} icon={<FindIcon />} first="Найти и" second="выделить" />
          </RibbonGroup>
        </Ribbon>
      </RibbonWrap>

      <FormulaBar>
        <NameBox>
          <input aria-label="Имя ячейки" defaultValue="Y9" />
          <IconButton $w={22} $h={18} aria-label="Список имён"><Caret color="#000" w={7} /></IconButton>
        </NameBox>
        <FxZone><Knob /><FxButton>fx</FxButton></FxZone>
        <FormulaInput aria-label="Строка формул" />
        <ExpandButton aria-label="Развернуть строку формул">
          <svg width="8" height="9" fill="none" stroke="#000" strokeWidth="1.500"><path d="M1 1l3 2.500L7 1M1 5l3 2.500L7 5" /></svg>
        </ExpandButton>
      </FormulaBar>
      <Splitter />

      <Workspace>
        <SheetArea>
          <Sheet>
            <colgroup>
              <col />
              {COLUMNS.map((c) => <col key={c} />)}
              <col />
            </colgroup>
            <thead>
              <tr>
                <Corner><svg width="12" height="12"><path d="M12 0v12H0z" fill="#dfeaf7" /></svg></Corner>
                {COLUMNS.map((c) => <HeadCell key={c} scope="col" $active={c === "Y"}>{c}</HeadCell>)}
                <HeadCell />
              </tr>
            </thead>
            <tbody>
              {ROWS.map((r) => (
                <tr key={r}>
                  <RowHead scope="row" $active={r === 9}>{r}</RowHead>
                  {COLUMNS.map((c) => <Cell key={c}>{r === 9 && c === "Y" && <Selection />}</Cell>)}
                  <Cell />
                </tr>
              ))}
            </tbody>
          </Sheet>
          <Chart />
        </SheetArea>
        <ScrollBar>
          <SplitBox />
          <ScrollButton $h={17} aria-label="Вверх"><svg width="9" height="5"><path d="M0 5h9L4.500 0z" fill="#33456b" /></svg></ScrollButton>
          <Thumb><svg width="8" height="8" stroke="#6f86a8"><path d="M0 .500h8M0 2.500h8M0 4.500h8M0 6.500h8" /></svg></Thumb>
          <ScrollButton $h={9} aria-label="Вниз"><svg width="9" height="5"><path d="M0 0h9L4.500 5z" fill="#33456b" /></svg></ScrollButton>
        </ScrollBar>
      </Workspace>
    </Window>
  );
}
